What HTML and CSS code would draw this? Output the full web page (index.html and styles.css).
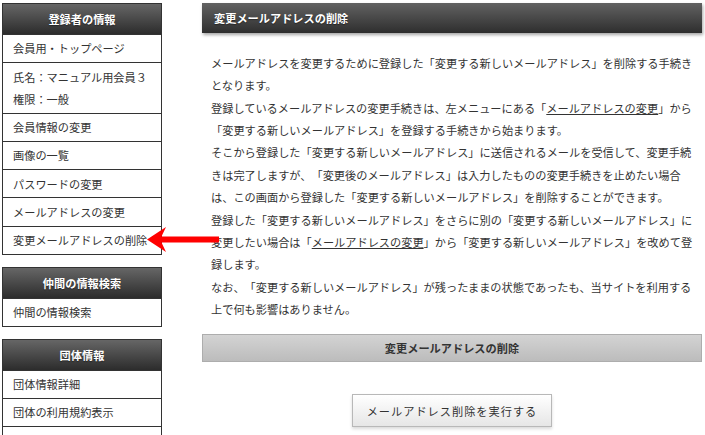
FILE: index.html
```html
<!DOCTYPE html>
<html lang="ja">
<head>
<meta charset="utf-8">
<title>変更メールアドレスの削除</title>
<link rel="stylesheet" href="styles.css">
</head>
<body>
<div class="page">
  <aside class="sidebar">
    <section class="menu">
      <h2 class="menu-head">登録者の情報</h2>
      <ul class="menu-list">
        <li>会員用・トップページ</li>
        <li>氏名：マニュアル用会員３<br>権限：一般</li>
        <li>会員情報の変更</li>
        <li>画像の一覧</li>
        <li>パスワードの変更</li>
        <li>メールアドレスの変更</li>
        <li>変更メールアドレスの削除</li>
      </ul>
    </section>
    <section class="menu">
      <h2 class="menu-head">仲間の情報検索</h2>
      <ul class="menu-list">
        <li>仲間の情報検索</li>
      </ul>
    </section>
    <section class="menu">
      <h2 class="menu-head">団体情報</h2>
      <ul class="menu-list">
        <li>団体情報詳細</li>
        <li>団体の利用規約表示</li>
        <li class="empty"></li>
      </ul>
    </section>
  </aside>
  <main class="main">
    <h1 class="title">変更メールアドレスの削除</h1>
    <div class="desc">
      <p>メールアドレスを変更するために登録した「変更する新しいメールアドレス」を削除する手続きとなります。</p>
      <p>登録しているメールアドレスの変更手続きは、左メニューにある「<a class="link" href="#">メールアドレスの変更</a>」から「変更する新しいメールアドレス」を登録する手続きから始まります。</p>
      <p>そこから登録した「変更する新しいメールアドレス」に送信されるメールを受信して、変更手続きは完了しますが、「変更後のメールアドレス」は入力したものの変更手続きを止めたい場合は、この画面から登録した「変更する新しいメールアドレス」を削除することができます。</p>
      <p>登録した「変更する新しいメールアドレス」をさらに別の「変更する新しいメールアドレス」に変更したい場合は「<a class="link" href="#">メールアドレスの変更</a>」から「変更する新しいメールアドレス」を改めて登録します。</p>
      <p>なお、「変更する新しいメールアドレス」が残ったままの状態であったも、当サイトを利用する上で何も影響はありません。</p>
    </div>
    <div class="subbar">変更メールアドレスの削除</div>
    <div class="actions">
      <button class="btn" type="button">メールアドレス削除を実行する</button>
    </div>
  </main>
  <svg class="arrow" width="76" height="28" viewBox="0 0 76 28" aria-hidden="true">
    <polygon points="1,13.5 20,1 15.5,10.5 73,10.5 73,16.5 15.5,16.5 20,26" fill="#ff0000"/>
  </svg>
</div>
</body>
</html>
```

FILE: styles.css
```css
html, body {
  margin: 0;
  padding: 0;
  overflow: hidden;
  background: #ffffff;
}

body {
  font-family: "Noto Sans CJK JP", "Noto Sans", sans-serif;
  font-size: 11.2px;
  color: #333333;
  text-spacing-trim: space-all;
}

.page {
  position: relative;
  display: flex;
  align-items: flex-start;
  gap: 40px;
  padding: 3px 0 0 2px;
}

.sidebar {
  width: 160px;
  flex-shrink: 0;
  display: flex;
  flex-direction: column;
  gap: 12px;
}

.menu {
  border: 1px solid #333333;
  background: #ffffff;
}

.menu-head {
  margin: 0;
  height: 30px;
  line-height: 30px;
  text-align: center;
  font-size: 11.2px;
  font-weight: bold;
  color: #ffffff;
  background: linear-gradient(#666666, #2c2c2c);
  text-shadow: 0 1px 1px rgba(0, 0, 0, 0.4);
}

.menu-list {
  list-style: none;
  margin: 0;
  padding: 0;
}

.menu-list li {
  border-top: 1px solid #333333;
  padding: 2.4px 10px;
  line-height: 22.4px;
}

.menu-list li.empty {
  height: 22.4px;
}

.main {
  width: 500px;
  flex-shrink: 0;
  display: flex;
  flex-direction: column;
}

.title {
  margin: 0;
  height: 30px;
  line-height: 30px;
  padding: 0 12px;
  font-size: 11.2px;
  font-weight: bold;
  color: #ffffff;
  background: linear-gradient(#626262, #2e2e2e);
  box-shadow: 1px 2px 3px rgba(0, 0, 0, 0.35);
  text-shadow: 0 1px 1px rgba(0, 0, 0, 0.4);
}

.desc {
  width: 483px;
  padding: 18.8px 0 0 9px;
  line-height: 22.4px;
}

.desc p {
  margin: 0;
}

.link {
  color: #333333;
  text-decoration: underline;
}

.subbar {
  margin-top: 13.4px;
  height: 26px;
  line-height: 26px;
  border: 1px solid #adadad;
  background: linear-gradient(#d3d3d3, #bcbcbc);
  text-align: center;
  font-weight: bold;
  color: #333333;
}

.actions {
  display: flex;
  justify-content: center;
  margin-top: 32px;
}

.btn {
  width: 200px;
  height: 33px;
  padding: 0;
  border: 1px solid #b8b8b8;
  background: linear-gradient(#ffffff, #e6e6e6);
  box-shadow: 0 2px 3px rgba(0, 0, 0, 0.15);
  font-family: inherit;
  font-size: 11.2px;
  letter-spacing: 1px;
  color: #333333;
}

.arrow {
  position: absolute;
  left: 146px;
  top: 226px;
}
```
